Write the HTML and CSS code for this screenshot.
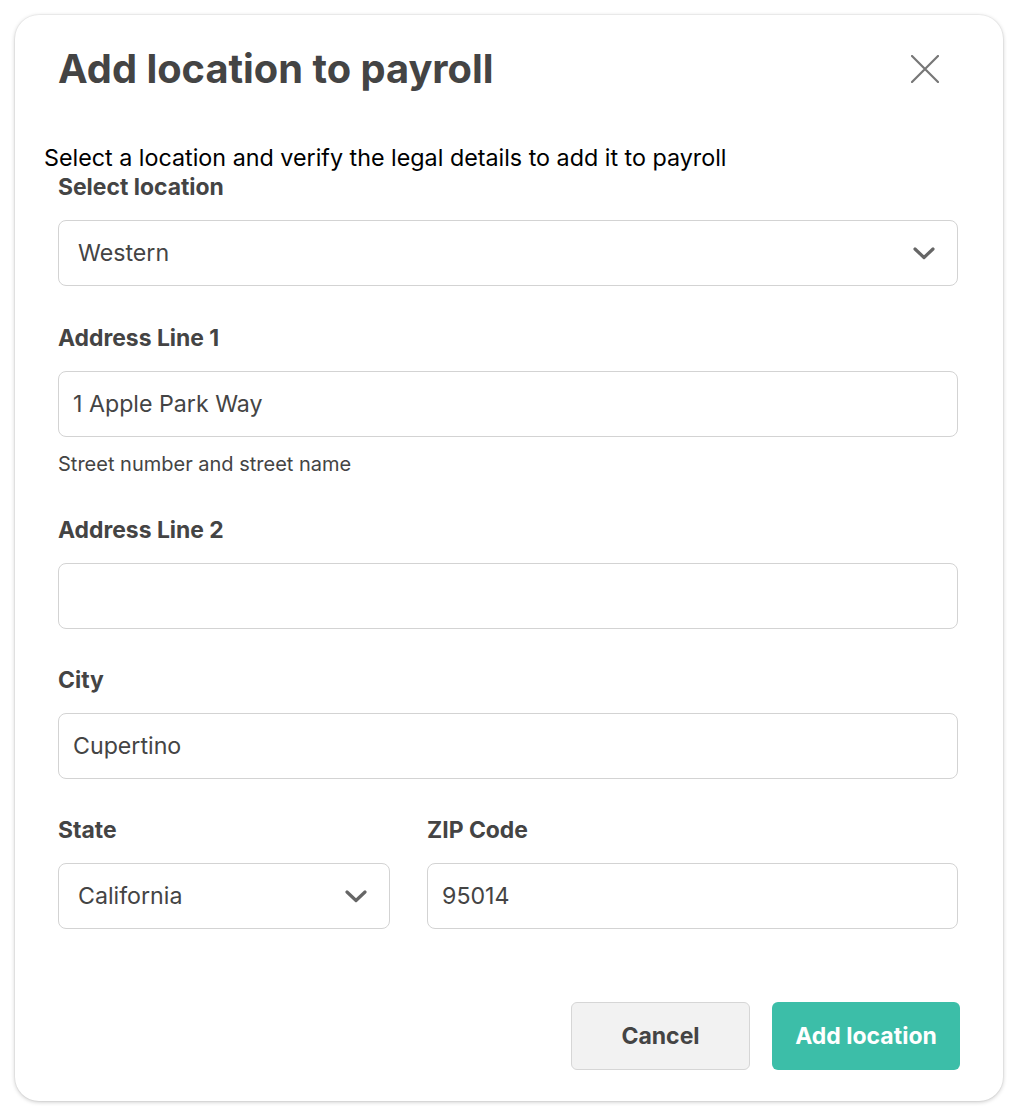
FILE: index.html
```html
<!DOCTYPE html>
<html lang="en">
<head>
<meta charset="utf-8">
<title>Add location to payroll</title>
<link rel="stylesheet" href="styles.css">
</head>
<body>
<div class="modal" role="dialog" aria-labelledby="modal-title">
  <header class="modal-header">
    <h1 id="modal-title" class="modal-title">Add location to payroll</h1>
    <button class="close-btn" type="button" aria-label="Close">
      <svg width="28" height="28" viewBox="0 0 28 28" aria-hidden="true"><path d="M1 1 L27 27 M27 1 L1 27" fill="none" stroke="#777" stroke-width="2.2" stroke-linecap="round"/></svg>
    </button>
  </header>
  <p class="intro">Select a location and verify the legal details to add it to payroll</p>
  <form class="form">
    <div class="field">
      <label class="label">Select location</label>
      <div class="control select"><span>Western</span><svg class="chev" width="22" height="13" viewBox="0 0 22 13" aria-hidden="true"><path d="M2 2 L11 10.5 L20 2" fill="none" stroke="#666" stroke-width="3.2" stroke-linecap="round" stroke-linejoin="round"/></svg></div>
    </div>
    <div class="field field-help">
      <label class="label">Address Line 1</label>
      <input class="control" type="text" value="1 Apple Park Way">
      <div class="help">Street number and street name</div>
    </div>
    <div class="field field-tight">
      <label class="label">Address Line 2</label>
      <input class="control" type="text" value="">
    </div>
    <div class="field field-tight">
      <label class="label">City</label>
      <input class="control" type="text" value="Cupertino">
    </div>
    <div class="row">
      <div class="field field-last">
        <label class="label">State</label>
        <div class="control select"><span>California</span><svg class="chev" width="22" height="13" viewBox="0 0 22 13" aria-hidden="true"><path d="M2 2 L11 10.5 L20 2" fill="none" stroke="#666" stroke-width="3.2" stroke-linecap="round" stroke-linejoin="round"/></svg></div>
      </div>
      <div class="field field-last">
        <label class="label">ZIP Code</label>
        <input class="control" type="text" value="95014">
      </div>
    </div>
  </form>
  <footer class="actions">
    <button class="btn btn-secondary" type="button">Cancel</button>
    <button class="btn btn-primary" type="button">Add location</button>
  </footer>
</div>
</body>
</html>
```
FILE: styles.css
```css
html, body {
  margin: 0;
  background: #fff;
}
body {
  padding: 15px;
  font-family: "Inter", "Noto Sans", "Liberation Sans", sans-serif;
  color: #444;
}
.modal {
  width: 988px;
  box-sizing: border-box;
  padding: 32px 45px 31px 43px;
  background: #fff;
  border-radius: 24px;
  box-shadow: 0 1px 4px rgba(0, 0, 0, 0.22), 0 0 0 1px rgba(0, 0, 0, 0.03);
}
.modal-header {
  display: flex;
  align-items: center;
  justify-content: space-between;
  height: 44px;
}
.modal-title {
  margin: 0;
  font-size: 39.8px;
  line-height: 44px;
  font-weight: 700;
  color: #444;
}
.close-btn {
  border: 0;
  background: none;
  padding: 0;
  margin: 0 19px 0 0;
  width: 28px;
  height: 28px;
  display: flex;
}
.intro {
  margin: 55px 0 5px -14px;
  font-size: 23.3px;
  line-height: 24px;
  color: #000;
}
.form {
  display: block;
}
.field {
  margin-bottom: 40px;
}
.field-help {
  margin-bottom: 43px;
}
.field-tight {
  margin-bottom: 39px;
}
.field-last {
  margin-bottom: 0;
}
.label {
  display: block;
  font-size: 22.9px;
  line-height: 24px;
  font-weight: 700;
  color: #444;
  margin-bottom: 21px;
}
.control {
  display: flex;
  align-items: center;
  width: 100%;
  height: 66px;
  box-sizing: border-box;
  margin: 0;
  border: 1px solid #d3d3d3;
  border-radius: 8px;
  padding: 0 14px;
  font-family: inherit;
  font-size: 23.2px;
  color: #444;
  background: #fff;
  outline: none;
}
.select {
  justify-content: space-between;
  padding: 0 22px 0 19px;
}
.chev {
  display: block;
}
.help {
  margin-top: 16px;
  font-size: 20px;
  line-height: 22px;
  color: #444;
}
.row {
  display: grid;
  grid-template-columns: 332px 1fr;
  column-gap: 37px;
}
.actions {
  display: flex;
  justify-content: flex-end;
  gap: 22px;
  margin: 73px -2px 0 0;
}
.btn {
  height: 68px;
  border-radius: 6px;
  font-family: inherit;
  font-size: 23px;
  font-weight: 700;
  cursor: pointer;
}
.btn-secondary {
  width: 179px;
  background: #f2f2f2;
  border: 1px solid #d6d6d6;
  color: #444;
}
.btn-primary {
  width: 188px;
  background: #3cbea8;
  border: 0;
  color: #fff;
}
```
